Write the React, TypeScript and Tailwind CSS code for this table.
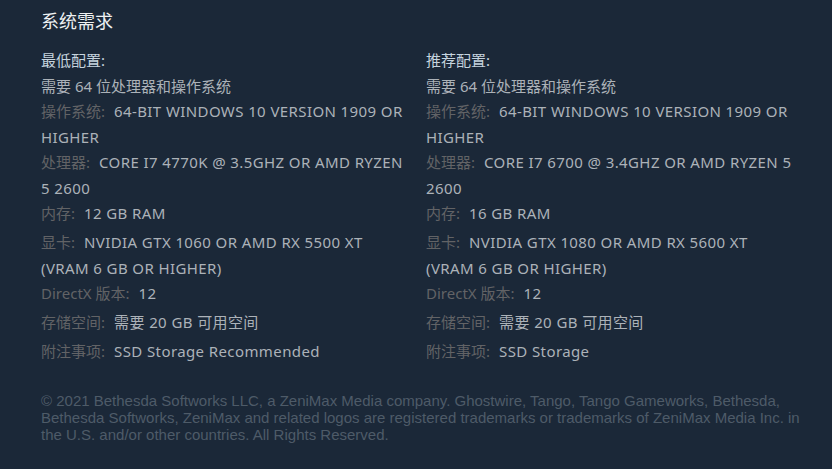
import React from "react";

type Row = { label: string; value: string; extra?: boolean };

const minRows: Row[] = [
  { label: "操作系统:", value: "64-BIT WINDOWS 10 VERSION 1909 OR HIGHER" },
  { label: "处理器:", value: "CORE I7 4770K @ 3.5GHZ OR AMD RYZEN 5 2600" },
  { label: "内存:", value: "12 GB RAM", extra: true },
  { label: "显卡:", value: "NVIDIA GTX 1060 OR AMD RX 5500 XT (VRAM 6 GB OR HIGHER)" },
  { label: "DirectX 版本:", value: "12", extra: true },
  { label: "存储空间:", value: "需要 20 GB 可用空间", extra: true },
  { label: "附注事项:", value: "SSD Storage Recommended" },
];

const recRows: Row[] = [
  { label: "操作系统:", value: "64-BIT WINDOWS 10 VERSION 1909 OR HIGHER" },
  { label: "处理器:", value: "CORE I7 6700 @ 3.4GHZ OR AMD RYZEN 5 2600" },
  { label: "内存:", value: "16 GB RAM", extra: true },
  { label: "显卡:", value: "NVIDIA GTX 1080 OR AMD RX 5600 XT (VRAM 6 GB OR HIGHER)" },
  { label: "DirectX 版本:", value: "12", extra: true },
  { label: "存储空间:", value: "需要 20 GB 可用空间", extra: true },
  { label: "附注事项:", value: "SSD Storage" },
];

function Col({ title, rows }: { title: string; rows: Row[] }) {
  return (
    <div className="w-[370px] text-[15px] leading-[25.5px] text-[#acb2b8]">
      <div className="text-[#c6d4df]">{title}</div>
      <ul>
        <li>需要 64 位处理器和操作系统</li>
        {rows.map((r) => (
          <li key={r.label} className={r.extra ? "mb-[3.5px]" : ""}>
            <span className="text-[#626366] mr-[9px]">{r.label}</span>
            <span className="tracking-[0.4px]">{r.value}</span>
          </li>
        ))}
      </ul>
    </div>
  );
}

export default function App() {
  return (
    <div
      className="w-[832px] h-[469px] bg-[#1b2838] pl-[41px] pr-[17px] pt-[6px]"
      style={{ fontFamily: '"Noto Sans", "Noto Sans CJK SC", sans-serif' }}
    >
      <h2 className="text-[18px] leading-[30px] text-[#eef1f3]">系统需求</h2>
      <div className="flex gap-[15px] mt-[12px]">
        <Col title="最低配置:" rows={minRows} />
        <Col title="推荐配置:" rows={recRows} />
      </div>
      <p
        className="mt-[27px] text-[15px] leading-[17.2px] text-[#4e5b68]"
        style={{ fontFamily: '"Liberation Sans", Arial, sans-serif' }}
      >
        © 2021 Bethesda Softworks LLC, a ZeniMax Media company. Ghostwire, Tango, Tango Gameworks, Bethesda,
        Bethesda Softworks, ZeniMax and related logos are registered trademarks or trademarks of ZeniMax Media Inc.
        in the U.S. and/or other countries. All Rights Reserved.
      </p>
    </div>
  );
}
